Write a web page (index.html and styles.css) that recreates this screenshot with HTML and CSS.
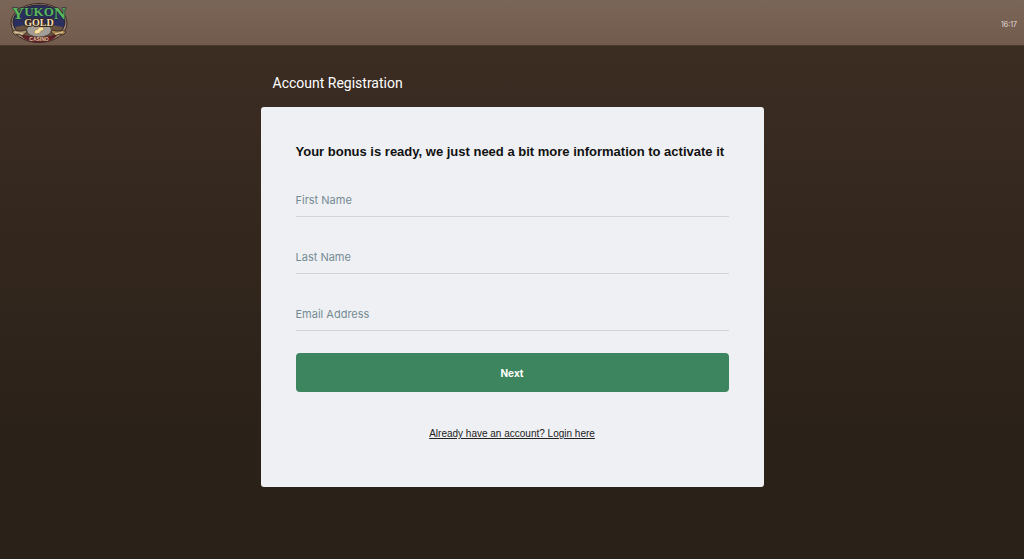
FILE: index.html
```html
<!DOCTYPE html>
<html lang="en">
<head>
    <meta charset="UTF-8">
    <meta name="viewport" content="width=device-width, initial-scale=1.0">
    <title>Account Registration</title>
    <link rel="stylesheet" href="styles.css">
</head>
<body>
    <header class="header">
        <a class="logo" href="#" aria-label="Yukon Gold Casino">
            <svg width="58" height="42" viewBox="0 0 58 42">
                <!-- Oval badge -->
                <ellipse cx="29" cy="21" rx="28" ry="19.5" fill="#a18a70" stroke="#3a2a26" stroke-width="1"/>
                <ellipse cx="29" cy="20" rx="26" ry="17" fill="#2b2f60" stroke="#2a2033" stroke-width="1"/>
                <path d="M5 25 Q29 19 53 25 Q49 37 29 39 Q9 37 5 25Z" fill="#66513f"/>
                <path d="M10 32 Q29 38 48 32 Q43 40.500 29 40.500 Q15 40.500 10 32Z" fill="#5c2027"/>
                <!-- Gold pan and nugget -->
                <ellipse cx="29" cy="28" rx="12.500" ry="7" fill="#a39e97" stroke="#4a4038" stroke-width=".8"/>
                <path d="M24 31l1-3 3-1 1-2 4 0 1 3-3 1-1 2-4 1z" fill="#f6e0a4" stroke="#8f6a2e" stroke-width=".5"/>
                <!-- Pick and leaves -->
                <path d="M2 30l3-2 3 1 4 0 4-1 1 2-5 4-3-2-4 1z" fill="#b09a76" stroke="#33231c" stroke-width=".8"/>
                <path d="M56 30l-3-2-3 1-4 0-4-1-1 2 5 4 3-2 4 1z" fill="#a98550" stroke="#33231c" stroke-width=".8"/>
                <path d="M5 30l8 2M45 32l8-2" stroke="#e6d5ae" stroke-width=".8"/>
                <text class="logo-yukon" x="29" y="17"><tspan class="logo-tall">Y</tspan><tspan dy="-3">UKO</tspan><tspan class="logo-tall" dy="3">N</tspan></text>
                <text class="logo-gold" x="29" y="24">GOLD</text>
                <text class="logo-casino" x="29" y="39">CASINO</text>
            </svg>
        </a>
        <time class="clock">16:17</time>
    </header>

    <main class="container">
        <h1 class="title">Account Registration</h1>
        <form class="card">
            <h2 class="subtitle">Your bonus is ready, we just need a bit more information to activate it</h2>
            <div class="field">
                <input type="text" id="first-name" placeholder=" " autocomplete="given-name">
                <label for="first-name">First Name</label>
            </div>
            <div class="field">
                <input type="text" id="last-name" placeholder=" " autocomplete="family-name">
                <label for="last-name">Last Name</label>
            </div>
            <div class="field">
                <input type="email" id="email" placeholder=" " autocomplete="email">
                <label for="email">Email Address</label>
            </div>
            <button class="next-btn" type="submit">Next</button>
            <a class="login-link" href="#">Already have an account? Login here</a>
        </form>
    </main>
</body>
</html>
```

FILE: styles.css
```css
* {
    margin: 0;
    padding: 0;
    box-sizing: border-box;
    font-family: 'Inter', sans-serif;
}

body {
    background: linear-gradient(#3e2e24, #2a2118 80%) #2a2118;
    min-height: 100vh;
}

.header {
    display: flex;
    justify-content: space-between;
    align-items: center;
    height: 46px;
    padding: 0 7px 0 10px;
    background: linear-gradient(#7a6658, #725b4d);
    border-bottom: 1px solid #4c392e;
}

.logo svg {
    display: block;
}

.logo text {
    text-anchor: middle;
    font-weight: bold;
    paint-order: stroke;
}

.logo-yukon,
.logo-yukon tspan {
    font-family: 'Liberation Serif', serif;
    font-size: 13px;
    fill: #5cb65c;
    stroke: #1d2a35;
    stroke-width: 1px;
}

.logo-yukon .logo-tall {
    font-size: 17px;
}

.logo-gold {
    font-family: 'Liberation Serif', serif;
    font-size: 10px;
    fill: #f2dfb4;
    stroke: #33251f;
    stroke-width: 2px;
}

.logo-casino {
    font-family: 'Liberation Sans', sans-serif;
    font-size: 5px;
    fill: #e0c49a;
}

.clock {
    padding-top: 4px;
    font-size: 7px;
    color: #e4dedb;
}

.container {
    width: 100%;
    max-width: 503px;
    margin: 0 auto;
    padding: 27px 0;
}

.title {
    padding: 0 12px;
    margin-bottom: 14px;
    font-family: 'Roboto', sans-serif;
    font-size: 14px;
    line-height: 20px;
    font-weight: 400;
    color: #fff;
}

.card {
    display: flex;
    flex-direction: column;
    padding: 35px 35px 45px;
    background: #eff0f3;
    border-radius: 3px;
}

.subtitle {
    margin-bottom: 17px;
    font-family: 'Liberation Sans', sans-serif;
    font-size: 13px;
    line-height: 20px;
    font-weight: 700;
    color: #111;
}

/* The label sits on the input until something is typed */
.field {
    display: grid;
    margin-bottom: 19px;
}

.field input,
.field label {
    grid-area: 1 / 1;
    font-size: 11px;
}

.field input {
    width: 100%;
    height: 38px;
    border: none;
    border-bottom: 1px solid #cfd5d9;
    background: transparent;
    color: #111;
    outline: none;
}

.field label {
    align-self: center;
    padding-top: 3px;
    color: #748b93;
    pointer-events: none;
}

.field input:focus {
    border-bottom-color: #3c855e;
}

.field input:not(:placeholder-shown) + label {
    visibility: hidden;
}

.next-btn {
    margin: 3px 0 34px;
    height: 39px;
    border: none;
    border-radius: 4px;
    background: #3c855e;
    color: #fff;
    font-size: 10px;
    font-weight: 700;
    cursor: pointer;
}

.next-btn:hover {
    background: #33744f;
}

.login-link {
    align-self: center;
    font-family: 'Liberation Sans', sans-serif;
    font-size: 10px;
    line-height: 16px;
    color: #222;
}
```
